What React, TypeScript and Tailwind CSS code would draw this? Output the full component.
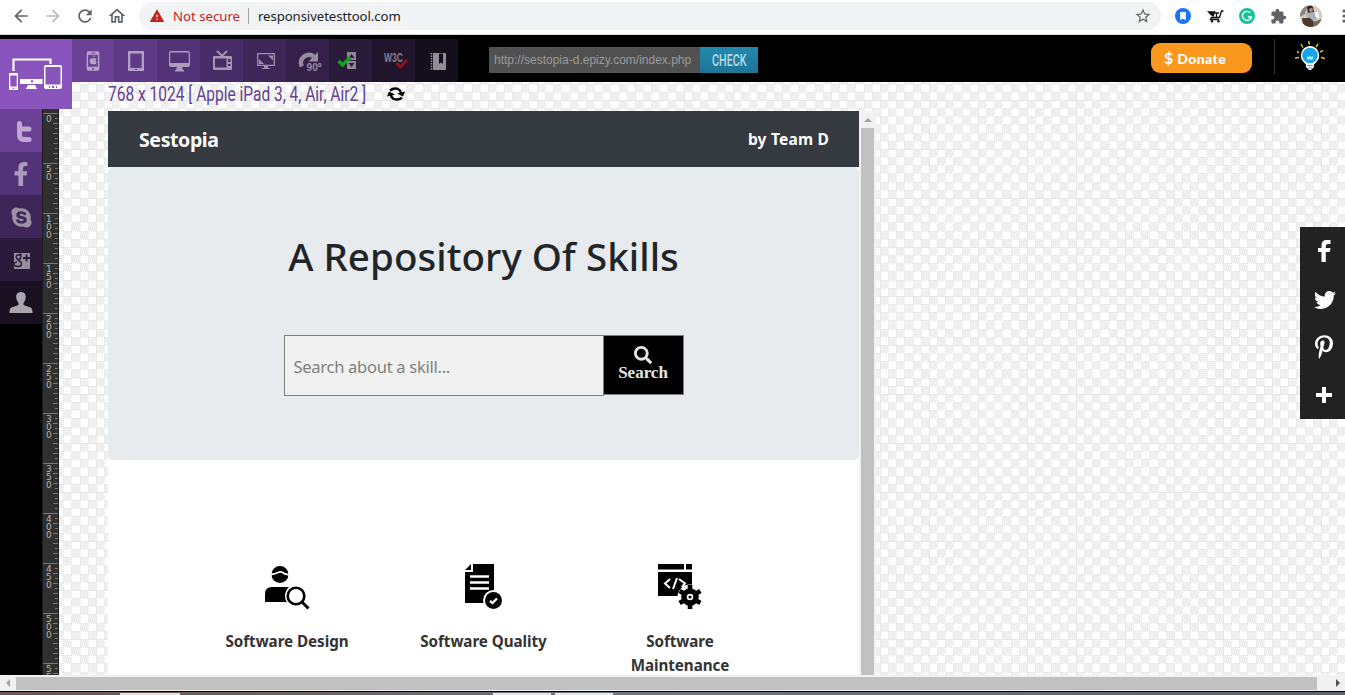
import React from "react";
import { FaFacebookF, FaTwitter, FaPinterestP, FaSkype, FaSearch } from "react-icons/fa";
import { MdArrowBack, MdArrowForward, MdRefresh, MdOutlineHome, MdStarBorder, MdExtension, MdWarning } from "react-icons/md";

const segoe = "font-['Noto_Sans','Open_Sans',sans-serif]";

function Checker() {
  const edges = [0, 8, 16, 24, 33, 41, 49];
  const cells: React.ReactNode[] = [];
  for (let r = 0; r < 6; r++)
    for (let c = 0; c < 6; c++)
      if ((r + c) % 2 === 0)
        cells.push(
          <rect key={`${r}-${c}`} x={edges[c]} y={edges[r]} width={edges[c + 1] - edges[c]} height={edges[r + 1] - edges[r]} fill="#efefef" />
        );
  return (
    <svg className="absolute inset-0 h-full w-full" shapeRendering="crispEdges">
      <defs>
        <pattern id="checker" x="37" y="18" width="49" height="49" patternUnits="userSpaceOnUse">
          <rect width="49" height="49" fill="#fff" />
          {cells}
          {edges.slice(1, 6).map((e) => (
            <g key={e} stroke="#e6e6e6" strokeWidth="1" strokeDasharray="1 1">
              <path d={`M${e + 0.5} 0V49`} />
              <path d={`M0 ${e + 0.5}H49`} />
            </g>
          ))}
          <path d="M0.5 0V49M0 0.5H49" stroke="#e8e8e8" />
        </pattern>
      </defs>
      <rect width="100%" height="100%" fill="url(#checker)" />
    </svg>
  );
}

function BrowserBar() {
  return (
    <div className="flex h-[35px] shrink-0 items-start border-b border-[#d5d7da] bg-white pt-[2px] text-[#5f6368]">
      <div className="flex h-7 w-[139px] shrink-0 items-center gap-3 pl-[11px]">
        <MdArrowBack size={20} />
        <MdArrowForward size={20} className="text-[#babcbe]" />
        <MdRefresh size={20} />
        <MdOutlineHome size={20} />
      </div>
      <div className={`flex h-7 w-[1022px] shrink-0 items-center rounded-full bg-[#f1f3f4] pl-[10px] ${segoe}`}>
        <MdWarning size={16} className="text-[#c5221f]" />
        <span className="ml-[8px] w-[67px] pt-px text-[13.2px] whitespace-nowrap text-[#c5221f]">Not secure</span>
        <span className="ml-[8px] h-4 w-px bg-[#9aa0a6]" />
        <span className="ml-[9px] pt-px text-[13.2px] tracking-[-0.09px] text-[#202124]">responsivetesttool.com</span>
        <MdStarBorder size={18} className="mr-[9px] ml-auto" />
      </div>
      <div className="flex h-7 items-center pl-[14px]">
        <svg width="16" height="16" viewBox="0 0 16 16">
          <circle cx="8" cy="8" r="8" fill="#1a73f8" />
          <path d="M5.2 4h5.6v8L8 10.7 5.2 12z" fill="#fff" />
        </svg>
        <svg className="ml-4" width="17" height="14" viewBox="0 0 17 14">
          <path d="M0 2.200L8.500 2.200 6.500 8Q3 6 0 2.200z" fill="#111" />
          <path d="M8 4H12M16.500 2H14.500L12.500 8.500H4.500L3.500 10.500H12M9.500 4V8" stroke="#111" strokeWidth="1.300" fill="none" />
          <circle cx="5" cy="12.200" r="1.200" fill="#111" />
          <circle cx="11.500" cy="12.200" r="1.200" fill="#111" />
        </svg>
        <svg className="ml-[15px]" width="16" height="16" viewBox="0 0 16 16">
          <circle cx="8" cy="8" r="8" fill="#15c39a" />
          <path d="M11.2 4.8A4.5 4.5 0 1 0 12.3 9H9M12.3 9l-.4 2.5" stroke="#fff" strokeWidth="1.4" fill="none" />
        </svg>
        <MdExtension size={17} className="ml-[15px]" />
        <svg className="ml-[13px]" width="22" height="22" viewBox="0 0 22 22">
          <defs>
            <clipPath id="face">
              <circle cx="11" cy="11" r="11" />
            </clipPath>
          </defs>
          <g clipPath="url(#face)">
            <rect width="22" height="22" fill="#d3cdc2" />
            <path d="M0 0H8L5 9 0 12z" fill="#8d8780" />
            <path d="M7 2q3-3 6 0l1 5-6 2z" fill="#2d2626" />
            <circle cx="11" cy="5" r="2" fill="#b58f7c" />
            <path d="M6 8l8-1 3 7-5 3-5-2z" fill="#a7b0bd" />
            <path d="M2 13l8 0 5 5-2 4H3z" fill="#51372f" />
            <path d="M15 7l3 0 1 6-3 0z" fill="#fff" />
            <path d="M13 17l9-3v8h-8z" fill="#756d5c" />
          </g>
        </svg>
        <svg className="ml-[20px] shrink-0" width="4" height="16" viewBox="0 0 4 16" fill="#5f6368">
          <circle cx="2" cy="3" r="1.6" />
          <circle cx="2" cy="8" r="1.6" />
          <circle cx="2" cy="13" r="1.6" />
        </svg>
      </div>
    </div>
  );
}

const ico = { width: 43, height: 43, viewBox: "0 0 43 43" };

const tools: { bg: string; icon: React.ReactNode }[] = [
  {
    bg: "bg-[#6b4196]",
    icon: (
      <svg {...ico} fill="#b9a2cc">
        <path fillRule="evenodd" d="M17 12h9q2 0 2 2v16q0 2-2 2h-9q-2 0-2-2V14q0-2 2-2zM16.500 15.500v12.500h10V15.500zM20 13.300v1h4v-1zM21.500 29a1 1 0 1 0 .1 0z" />
        <path d="M21.500 19.500c2-1 3.500 0 3.500.5-1.200 1-1 2.500.3 3-.8 2.500-2 3-3.800 2.200-2 .8-3.500-1-3.300-3.600.3-2 1.700-2.800 3.300-2.100zM21.500 18.500q0-2 2-2.300 0 2-2 2.300z" />
      </svg>
    ),
  },
  {
    bg: "bg-[#5f3a86]",
    icon: (
      <svg {...ico} fill="#b3a0c4">
        <path fillRule="evenodd" d="M15 12h14q1 0 1 1v18q0 1-1 1H15q-1 0-1-1V13q0-1 1-1zM16.300 14.500v14.500h11.400V14.500zM21 30v1h2v-1z" />
      </svg>
    ),
  },
  {
    bg: "bg-[#533377]",
    icon: (
      <svg {...ico} fill="#aa9cba">
        <path fillRule="evenodd" d="M14 12h17q2 0 2 2v12q0 2-2 2H14q-2 0-2-2V14q0-2 2-2zM13.200 13.500v10.500h18.600v-10.500zM20 28h5l1 3h1v1.500H18v-1.500h1z" />
      </svg>
    ),
  },
  {
    bg: "bg-[#482c67]",
    icon: (
      <svg {...ico} fill="#a598b2">
        <path fillRule="evenodd" d="M14 17h17q1 0 1 1v12q0 1-1 1H14q-1 0-1-1V18q0-1 1-1zM15 19.500v9h11.500v-9zM28 20v3h2.500v-3zM28 25v2h2.500v-2z" />
        <path d="M17 12l5 5 5-5" stroke="#a598b2" strokeWidth="1.800" fill="none" />
      </svg>
    ),
  },
  {
    bg: "bg-[#3e2658]",
    icon: (
      <svg {...ico} fill="#9c91a6">
        <path fillRule="evenodd" d="M14 14h18v13H14zM15.300 15.300v10.400h15.400V15.300z" />
        <path d="M25 16.500h5v5zM16 20v5h5zM21 27h4v2h2v1h-8v-1h2z" />
      </svg>
    ),
  },
  {
    bg: "bg-[#342049]",
    icon: (
      <svg {...ico}>
        <path d="M15.800 27.500a8 8 0 0 1 12-10" stroke="#978d9f" strokeWidth="4.500" fill="none" />
        <path d="M32 13v9.500h-9.500z" fill="#978d9f" />
        <text x="20.500" y="32" fontSize="11" fontWeight="700" fontFamily="Liberation Sans Narrow, Liberation Sans, sans-serif" textLength="15" lengthAdjust="spacingAndGlyphs" fill="#978d9f">90º</text>
      </svg>
    ),
  },
  {
    bg: "bg-[#2a1b3a]",
    icon: (
      <svg {...ico}>
        <path fillRule="evenodd" d="M18 13h9v8h-9zM18 22h9v8h-9zM19.500 19h6l-3-4zM19.500 24h6l-3 4z" fill="#8f8797" />
        <path d="M9.500 22l4 4 8-8" stroke="#19a01e" strokeWidth="3.400" fill="none" />
      </svg>
    ),
  },
  {
    bg: "bg-[#20152c]",
    icon: (
      <svg {...ico}>
        <text x="12" y="23" fontSize="12" fontWeight="700" fontFamily="Liberation Sans Narrow, Liberation Sans, sans-serif" textLength="19" lengthAdjust="spacingAndGlyphs" fill="#857f8b">W3C</text>
        <path d="M24.500 24l4 4 6.500-7" stroke="#96101a" strokeWidth="2.700" fill="none" />
      </svg>
    ),
  },
  {
    bg: "bg-[#150e1d]",
    icon: (
      <svg {...ico} fill="#908b95">
        <path fillRule="evenodd" d="M18 14h13v17H18zM24 14.500v10.500l2-1.500 2 1.500V14.500z" />
        <path d="M16.500 14v17" stroke="#908b95" strokeWidth="1.500" strokeDasharray="1.500 1" />
      </svg>
    ),
  },
];

function ToolHeader() {
  return (
    <div className="z-10 flex h-[47px] shrink-0 items-start bg-black pt-[4px]">
      <div className="h-[70px] w-[72px] shrink-0 bg-[#8954bb]">
        <svg width="72" height="70" viewBox="0 0 72 70">
          <path d="M13.500 32V20.500H50.500V25" stroke="#fff" strokeWidth="2.200" fill="none" />
          <path fill="#fff" fillRule="evenodd" d="M10 34h7q1 0 1 1v15q0 1-1 1h-7q-1 0-1-1V35q0-1 1-1zM10.300 36.500v11h6.400v-11zM12.500 48.700v1h2v-1zM20 40h22.500v5H20zM31 41.300v2h2v-2zM28 46h7l2 4H26zM46 26h14q2 0 2 2v20q0 2-2 2H46q-2 0-2-2V28q0-2 2-2zM45.500 28v17.500h15V28zM49 47v2h1v-2zM52 47v2h2v-2zM56 47v2h1v-2z" />
        </svg>
      </div>
      {tools.map((t, i) => (
        <div key={i} className={`flex h-[43px] shrink-0 overflow-hidden ${i === 0 ? "w-[42px]" : "w-[43px]"} ${t.bg}`}>
          {t.icon}
        </div>
      ))}
      <div className="mt-[8px] ml-[31px] flex h-[26px]">
        <div className="flex w-[211px] items-center bg-[#515151] pl-[5px] font-['Liberation_Sans',sans-serif] text-[12px] whitespace-nowrap text-[#9b9b9b]">
          http://sestopia-d.epizy.com/index.php
        </div>
        <div className="flex w-[58px] items-center justify-center bg-linear-to-b from-[#2389ae] to-[#1d7596] font-[Roboto,sans-serif] text-[17px] font-medium text-[#bad8e3]">
          <span className="scale-x-[0.63] pt-px">CHECK</span>
        </div>
      </div>
      <div className="mt-[4px] ml-auto flex h-[30px] w-[101px] items-center rounded-[9px] bg-[#f9981d] pl-[13px] font-[Lato,sans-serif] text-white">
        <span className="text-[16px] font-bold">$</span>
        <span className="ml-[4px] text-[14px] font-black tracking-[0.4px]">Donate</span>
      </div>
      <div className="ml-[22px] h-[35px] w-px bg-[#333]" />
      <svg className="ml-[19px] mr-[19px]" width="32" height="36" viewBox="0 0 32 36">
        <path d="M9 8.500L7 5M15.500 5.500L14.500 2M22 8l2-3M26 13l3-1.500M27 18.500l4 1M5 13.500L3 12.500M5 18.500l-4 .5" stroke="#d5c52a" strokeWidth="1.500" />
        <path d="M16 7a9.500 9.500 0 0 1 6 16.500l-2 2v2.500l-3 3h-2l-3-3v-2.500l-2-2A9.500 9.500 0 0 1 16 7z" fill="#fff" />
        <circle cx="16" cy="16.500" r="7.800" fill="#17a5e5" />
        <path d="M13 20.500v-3.500l1.500 1 1.500-1 1.500 1 1.500-1v3.500z" fill="#a9e5fb" />
        <path d="M13 26.500h6M14 29h4" stroke="#38aee0" />
      </svg>
    </div>
  );
}

function SocialRail() {
  return (
    <div className="flex w-[42px] shrink-0 flex-col bg-black pt-[27px]">
      <div className="flex h-[43px] items-center justify-center bg-[#6b4196] pt-[2px] pl-[5px]">
        <svg width="16" height="22" viewBox="0 0 16 22">
          <path d="M3.500 2.500V14q0 4.500 4.500 4.500H13M4 8h9" stroke="#bfa8d2" strokeWidth="5" strokeLinecap="round" fill="none" />
        </svg>
      </div>
      <div className="flex h-[43px] items-center justify-center bg-[#533377] pt-px">
        <FaFacebookF size={24} className="text-[#aa9cba]" />
      </div>
      <div className="flex h-[43px] items-center justify-center bg-[#3e2658] pt-px">
        <FaSkype size={23} className="text-[#9c91a6]" />
      </div>
      <div className="flex h-[43px] items-center justify-center bg-[#2a1b3a] pt-[3px] pl-[2px]">
        <svg width="16" height="16" viewBox="0 0 16 16">
          <rect width="16" height="16" fill="#958d9d" />
          <g stroke="#2a1b3a" fill="none" strokeWidth="1.400">
            <circle cx="4.500" cy="4" r="2.300" />
            <path d="M5 1.500h3M5.500 6l-1 1.500q3 1 3 3.500t-3.500 2.500-4-2 3-2.500" />
            <path d="M9 5h7M12.500 1.500v7" strokeWidth="1.800" />
          </g>
        </svg>
      </div>
      <div className="flex h-[43px] items-center justify-center bg-[#191021]">
        <svg width="24" height="22" viewBox="0 0 24 22">
          <path d="M12 0c4 0 5.500 3 4.500 7-.5 2-1.500 3-2 4v2l7 2.500q2 .7 2 5.500H.5q0-4.800 2-5.500l7-2.500v-2c-.5-1-1.500-2-2-4C6.500 3 8 0 12 0z" fill="#aaa6ae" />
        </svg>
      </div>
    </div>
  );
}

function Ruler() {
  const ticks = Array.from({ length: 113 }, (_, i) => i);
  return (
    <div className="relative w-[17px] shrink-0 overflow-hidden border-x border-[#1c1c1c] bg-[#303030]">
      <svg className="absolute inset-0" width="15" height="594" shapeRendering="crispEdges">
        {ticks.map((i) => {
          const len = i % 10 === 0 ? 15 : i % 2 === 0 ? 5 : 3;
          return <rect key={i} x={15 - len} y={31 + i * 5} width={len} height="1" fill="#777" />;
        })}
      </svg>
      <div className="flex flex-col pt-[33px]">
        {Array.from({ length: 12 }, (_, i) => (
          <div key={i} className="h-[50px] shrink-0 pl-[3px] font-['DejaVu_Sans',sans-serif] text-[9px] leading-[8px] text-[#b5b5b5]">
            {String(i * 50).split("").map((d, j) => (
              <div key={j}>{d}</div>
            ))}
          </div>
        ))}
      </div>
    </div>
  );
}

const topics = [
  {
    lines: ["Software Design"],
    icon: (
      <svg width="46" height="46" viewBox="0 0 46 46">
        <circle cx="16" cy="10.500" r="8.500" />
        <path d="M7 10.500q4-.5 7-2 2-1 3.500-.5t3.500 2l4 .8" stroke="#fff" strokeWidth="1.800" fill="none" />
        <path d="M1 38V30q0-7 7-7h17q-4 4-4 9 0 4 2 6z" />
        <circle cx="32" cy="32" r="8.300" fill="none" stroke="#000" strokeWidth="2.600" />
        <path d="M38 38l6.500 6.500" stroke="#000" strokeWidth="3" />
      </svg>
    ),
  },
  {
    lines: ["Software Quality"],
    icon: (
      <svg width="46" height="46" viewBox="0 0 46 46">
        <path d="M4 8h8V0h21v39H4zM4 6l6-6v6z" />
        <path d="M9 12.500h19M9 18.500h19M9 24.500h19" stroke="#fff" strokeWidth="2.400" />
        <circle cx="32.500" cy="36.500" r="10.500" fill="#fff" />
        <circle cx="32.500" cy="36.500" r="8.500" />
        <path d="M29 37l2.500 2 4.500-4.500" stroke="#fff" strokeWidth="2.400" fill="none" />
      </svg>
    ),
  },
  {
    lines: ["Software", "Maintenance"],
    icon: (
      <svg width="46" height="46" viewBox="0 0 46 46">
        <path d="M1 0h26v5.500H1zM29 0h6v5.500h-6zM1 8h34v14q-9 0-13 10H1z" />
        <path d="M13 15l-5 4.500 5 4.500M20 14l-4 11M22 15l6 4.500-3 3.500" stroke="#fff" strokeWidth="2" fill="none" />
        <circle cx="33" cy="33" r="12.500" fill="#fff" />
        <circle cx="33" cy="33" r="6" fill="none" stroke="#000" strokeWidth="5.500" />
        <path d="M33 21v6M33 39v6M22.600 27l5.200 3M38.200 36l5.200 3M22.600 39l5.200-3M38.200 30l5.200-3" stroke="#000" strokeWidth="4.600" />
        <circle cx="33" cy="33" r="1.600" />
      </svg>
    ),
  },
];

function Preview() {
  return (
    <div className={`flex h-[564px] w-[768px] ${segoe}`}>
      <div className="flex w-[751px] flex-col bg-white">
        <div className="flex h-[56px] shrink-0 items-center justify-between bg-[#343a40] pr-[30px] pl-[31px] font-bold text-white">
          <span className="pt-[2px] text-[19.5px] tracking-[-0.38px]">Sestopia</span>
          <span className="pt-px text-[15.5px] tracking-[0.2px]">by Team D</span>
        </div>
        <div className="flex h-[293px] shrink-0 flex-col items-center rounded-[5px] bg-[#e8ebee] pt-[59px]">
          <h1 className="text-[38.5px] leading-[60px] font-medium tracking-[0.05px] whitespace-nowrap text-[#212529]">A Repository Of Skills</h1>
          <div className="mt-[49px] flex h-[61px] w-[400px] items-start">
            <div className="flex h-[61px] w-[320px] items-center border border-[#808080] bg-[#f1f1f1] pt-[3px] pl-[9px] text-[16.500px] tracking-[-0.270px] text-[#808080]">
              Search about a skill...
            </div>
            <div className="flex h-[60px] w-[80px] flex-col items-center border border-l-0 border-[#808080] bg-black pt-[10px] font-['Liberation_Serif',serif] text-[17px] leading-[18px] font-bold text-[#e5e5e5]">
              <FaSearch size={18} />
              <span>Search</span>
            </div>
          </div>
        </div>
        <div className="flex justify-center pt-[104px]">
          {topics.map((t) => (
            <div key={t.lines[0]} className="flex w-[196.500px] flex-col items-center">
              {t.icon}
              <div className="mt-[19px] text-center text-[15.2px] leading-6 font-bold tracking-[-0.05px] text-[#333]">
                {t.lines.map((l) => (
                  <div key={l}>{l}</div>
                ))}
              </div>
            </div>
          ))}
        </div>
      </div>
      <div className="flex w-[17px] flex-col items-center bg-[#f1f1f1]">
        <div className="flex h-[17px] w-full shrink-0 items-center justify-center">
          <svg width="8" height="4">
            <path d="M0 4l4-4 4 4z" fill="#a3a3a3" />
          </svg>
        </div>
        <div className="w-[13px] flex-1 bg-[#c1c1c1]" />
      </div>
    </div>
  );
}

function ShareBar() {
  return (
    <div className="absolute top-[145px] right-0 flex h-[192px] w-[45px] flex-col bg-[#222] pl-[3px] text-white">
      <div className="flex h-12 items-center justify-center">
        <svg width="14" height="22" viewBox="0 0 14 22">
          <path d="M4.500 22V12H1V8h3.500V5.500Q4.500 0 9.500 0H13.500V4H11Q8.800 4 8.800 6.200V8h4.700l-.6 4H8.800V22z" fill="#fff" />
        </svg>
      </div>
      <div className="flex h-12 items-center justify-center pt-px pl-[2px]"><FaTwitter size={22} /></div>
      <div className="flex h-12 items-center justify-center"><FaPinterestP size={24} /></div>
      <div className="flex h-12 items-center justify-center">
        <svg width="16" height="16"><path d="M8 0v16M0 8h16" stroke="#fff" strokeWidth="4" /></svg>
      </div>
    </div>
  );
}

export default function App() {
  return (
    <div className="flex h-[695px] w-[1345px] flex-col overflow-hidden bg-white">
      <BrowserBar />
      <ToolHeader />
      <div className="flex h-[593px] shrink-0 overflow-hidden">
        <SocialRail />
        <Ruler />
        <div className="relative flex-1 overflow-hidden">
          <Checker />
          <div className="relative pl-[49px]">
            <div className="flex h-[29px] items-center pb-[5px] font-[Roboto,sans-serif] text-[20px] text-[#64418f]">
              <div className="w-[279px]">
                <span className="inline-block origin-left scale-x-[0.775] whitespace-nowrap">768 x 1024 [ Apple iPad 3, 4, Air, Air2 ]</span>
              </div>
              <svg width="18" height="16" viewBox="0 0 18 16">
                <path d="M3 4.500Q7 1.500 11 3q2.500 1 3 4" stroke="#000" strokeWidth="2.400" fill="none" />
                <path d="M10 7.500l8-2-2 5z" />
                <path d="M15 11.800Q11 14.500 7 13Q4.500 12 4 9" stroke="#000" strokeWidth="2.400" fill="none" />
                <path d="M8 8.500l-8 2 2-5z" />
              </svg>
            </div>
            <Preview />
          </div>
          <ShareBar />
        </div>
      </div>
      <div className="flex h-[16px] shrink-0 items-center bg-[#f1f1f1]">
        <div className="flex w-4 justify-center"><svg width="4" height="8"><path d="M4 0v8L0 4z" fill="#a3a3a3" /></svg></div>
        <div className="h-[13px] w-[1301px] bg-[#c1c1c1]" />
        <div className="flex flex-1 justify-end pr-[5px]"><svg width="4" height="8"><path d="M0 0v8l4-4z" fill="#505050" /></svg></div>
      </div>
      <div className="flex h-[4px] shrink-0 border-t border-black bg-linear-to-r from-[#6f5550] via-[#6d7681] to-[#59666c] pt-px">
        <div className="ml-[120px] h-1 w-[60px] bg-[#e6e1de]" />
        <div className="ml-[313px] h-1 w-[58px] bg-[#e6e9ec]" />
        <div className="ml-[4px] h-1 w-[58px] bg-[#e6e9ec]" />
      </div>
    </div>
  );
}
